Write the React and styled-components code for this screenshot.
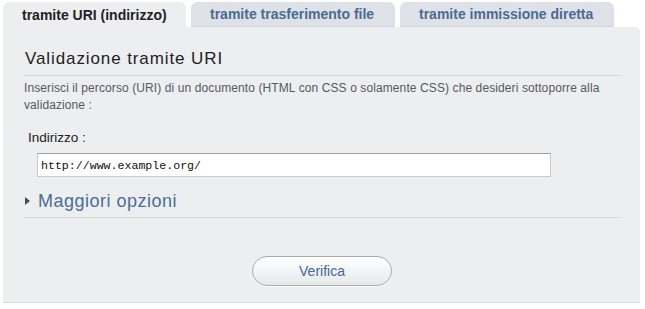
import React from 'react';
import styled, { createGlobalStyle } from 'styled-components';

const Global = createGlobalStyle`
    html, body {
        margin: 0;
        padding: 0;
        background: #ffffff;
        font-family: "Liberation Sans", Arial, sans-serif;
    }
`;

const Page = styled.div`
    width: 637px;
    padding: 2px 0 0 3px;
`;

const TabBar = styled.ul`
    display: flex;
    gap: 5px;
    margin: 0;
    padding: 0;
    list-style: none;
`;

const Tab = styled.li`
    box-sizing: border-box;
    width: ${(p) => p.$width}px;
    height: 25px;
    padding: 0 0 0 19px;
    display: flex;
    align-items: center;
    border-radius: 6px 6px 0 0;
    font-size: 14px;
    font-weight: bold;
    white-space: nowrap;
    color: ${(p) => (p.$active ? '#222222' : '#4a6b93')};
    background: ${(p) => (p.$active ? '#eceef0' : '#dee2e8')};
    border-bottom: ${(p) => (p.$active ? 'none' : '1px solid #d3d7dd')};
`;

const Panel = styled.section`
    box-sizing: border-box;
    height: 276px;
    padding: 21px 20px 0 21px;
    background: #eceef0;
    border-radius: 0 5px 0 0;
    border-bottom: 1px solid #dcdde1;
    display: flex;
    flex-direction: column;
`;

const Heading = styled.h2`
    margin: 0;
    padding: 0 0 5px 1px;
    font-size: 17px;
    line-height: 22px;
    font-weight: normal;
    letter-spacing: 0.9px;
    color: #222222;
    border-bottom: 1px solid #d5d7da;
`;

const Intro = styled.p`
    margin: 4px 0 0;
    font-size: 12px;
    line-height: 17px;
    letter-spacing: 0.1px;
    color: #555a60;
`;

const Label = styled.label`
    display: block;
    margin: 16px 0 0 4px;
    font-size: 13.5px;
    line-height: 16px;
    color: #222222;
`;

const UriInput = styled.input`
    box-sizing: border-box;
    width: 514px;
    height: 24px;
    margin: 7px 0 0 13px;
    padding: 0 3px;
    font-family: "Liberation Mono", "Courier New", monospace;
    font-size: 11.6px;
    color: #111111;
    background: #ffffff;
    border: 1px solid #c9cbce;
    border-top-color: #9c9ea1;
    outline: none;
`;

const MoreOptions = styled.div`
    display: flex;
    align-items: center;
    gap: 8px;
    margin-top: 13px;
    padding: 0 0 5px 1px;
    border-bottom: 1px solid #d5d7da;
`;

const Arrow = styled.span`
    width: 0;
    height: 0;
    border-top: 4px solid transparent;
    border-bottom: 4px solid transparent;
    border-left: 5px solid #4a4c50;
`;

const MoreLink = styled.span`
    font-size: 18px;
    line-height: 22px;
    letter-spacing: 0.5px;
    color: #4a6f99;
`;

const Actions = styled.div`
    display: flex;
    justify-content: center;
    margin-top: 38px;
`;

const SubmitButton = styled.button`
    width: 140px;
    height: 30px;
    border-radius: 15px;
    border: 1px solid #a9abae;
    background: linear-gradient(#ffffff, #f3f4f5 50%, #e6e7e9);
    box-shadow: 0 1px 0 rgba(255, 255, 255, 0.8);
    font-family: "Liberation Sans", Arial, sans-serif;
    font-size: 14px;
    color: #41699a;
    cursor: pointer;
`;

const tabs = [
    { label: 'tramite URI (indirizzo)', width: 183, active: true },
    { label: 'tramite trasferimento file', width: 204 },
    { label: 'tramite immissione diretta', width: 214 }
];

export default function App() {
    return (
        <>
            <Global />
            <Page>
                <TabBar>
                    {tabs.map((t) => (
                        <Tab key={t.label} $width={t.width} $active={t.active}>
                            {t.label}
                        </Tab>
                    ))}
                </TabBar>
                <Panel>
                    <Heading>Validazione tramite URI</Heading>
                    <Intro>
                        Inserisci il percorso (URI) di un documento (HTML con CSS o solamente
                        CSS) che desideri sottoporre alla validazione :
                    </Intro>
                    <Label htmlFor="uri">Indirizzo :</Label>
                    <UriInput id="uri" type="text" defaultValue="http://www.example.org/" />
                    <MoreOptions>
                        <Arrow />
                        <MoreLink>Maggiori opzioni</MoreLink>
                    </MoreOptions>
                    <Actions>
                        <SubmitButton type="button">Verifica</SubmitButton>
                    </Actions>
                </Panel>
            </Page>
        </>
    );
}
